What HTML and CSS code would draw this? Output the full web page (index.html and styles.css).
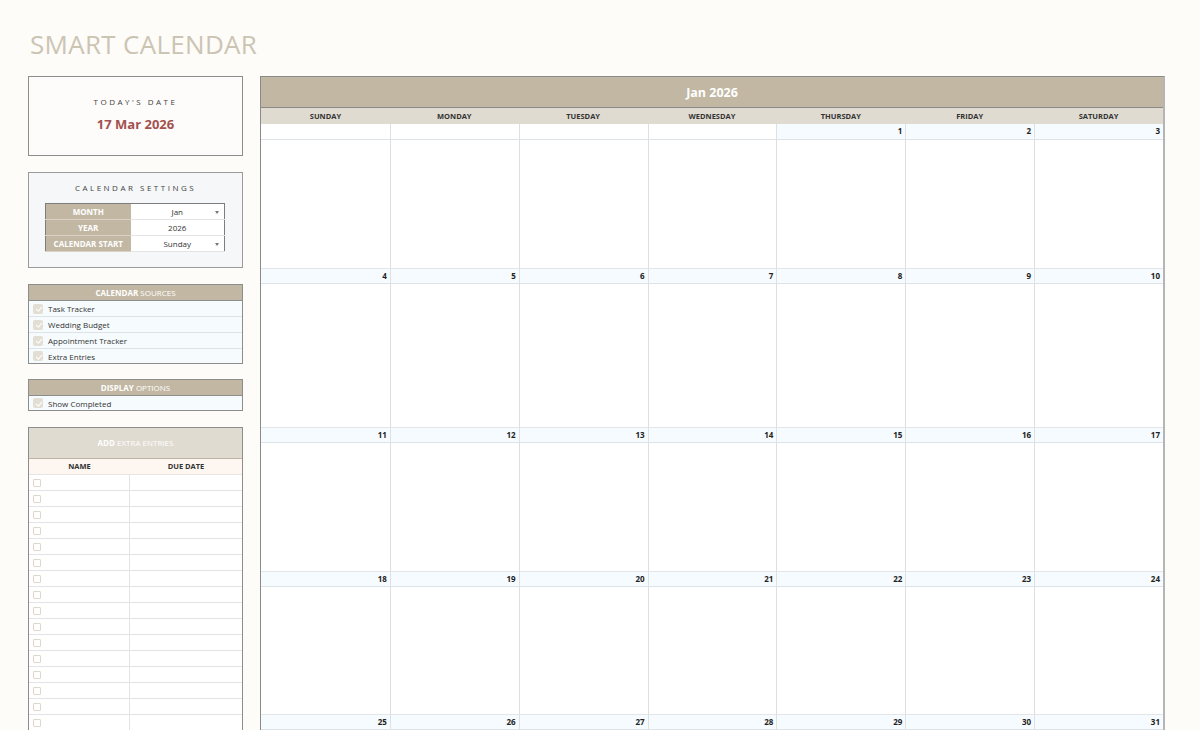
FILE: index.html
```html
<!DOCTYPE html>
<html>
<head>
<meta charset="utf-8">
<link rel="stylesheet" href="styles.css">
</head>
<body>
<div class="page">
  <h1 class="title">SMART CALENDAR</h1>
  <div class="main">
    <aside class="sidebar">
      <section class="today">
        <div class="caption">TODAY'S DATE</div>
        <div class="today-value">17 Mar 2026</div>
      </section>

      <section class="settings">
        <div class="caption">CALENDAR SETTINGS</div>
        <table class="settings-table">
          <tr><th>MONTH</th><td><span>Jan</span><i class="arrow"></i></td></tr>
          <tr><th>YEAR</th><td><span>2026</span></td></tr>
          <tr><th>CALENDAR START</th><td><span>Sunday</span><i class="arrow"></i></td></tr>
        </table>
      </section>

      <section class="list">
        <div class="list-head"><b>CALENDAR</b> SOURCES</div>
        <div class="list-row"><span class="check"></span>Task Tracker</div>
        <div class="list-row"><span class="check"></span>Wedding Budget</div>
        <div class="list-row"><span class="check"></span>Appointment Tracker</div>
        <div class="list-row"><span class="check"></span>Extra Entries</div>
      </section>

      <section class="list display">
        <div class="list-head"><b>DISPLAY</b> OPTIONS</div>
        <div class="list-row"><span class="check"></span>Show Completed</div>
      </section>

      <section class="extra">
        <div class="extra-head"><b>ADD</b> EXTRA ENTRIES</div>
        <div class="extra-cols"><div>NAME</div><div>DUE DATE</div></div>
        <div class="extra-row"><div><span class="box"></span></div><div></div></div>
        <div class="extra-row"><div><span class="box"></span></div><div></div></div>
        <div class="extra-row"><div><span class="box"></span></div><div></div></div>
        <div class="extra-row"><div><span class="box"></span></div><div></div></div>
        <div class="extra-row"><div><span class="box"></span></div><div></div></div>
        <div class="extra-row"><div><span class="box"></span></div><div></div></div>
        <div class="extra-row"><div><span class="box"></span></div><div></div></div>
        <div class="extra-row"><div><span class="box"></span></div><div></div></div>
        <div class="extra-row"><div><span class="box"></span></div><div></div></div>
        <div class="extra-row"><div><span class="box"></span></div><div></div></div>
        <div class="extra-row"><div><span class="box"></span></div><div></div></div>
        <div class="extra-row"><div><span class="box"></span></div><div></div></div>
        <div class="extra-row"><div><span class="box"></span></div><div></div></div>
        <div class="extra-row"><div><span class="box"></span></div><div></div></div>
        <div class="extra-row"><div><span class="box"></span></div><div></div></div>
        <div class="extra-row"><div><span class="box"></span></div><div></div></div>
      </section>
    </aside>

    <section class="calendar">
      <div class="month">Jan 2026</div>
      <div class="days">
        <div>SUNDAY</div><div>MONDAY</div><div>TUESDAY</div><div>WEDNESDAY</div><div>THURSDAY</div><div>FRIDAY</div><div>SATURDAY</div>
      </div>

      <div class="week">
        <div class="date blank"></div><div class="date blank"></div><div class="date blank"></div><div class="date blank"></div><div class="date">1</div><div class="date">2</div><div class="date">3</div>
        <div class="cell"></div><div class="cell"></div><div class="cell"></div><div class="cell"></div><div class="cell"></div><div class="cell"></div><div class="cell"></div>
      </div>
      <div class="week tall">
        <div class="date">4</div><div class="date">5</div><div class="date">6</div><div class="date">7</div><div class="date">8</div><div class="date">9</div><div class="date">10</div>
        <div class="cell"></div><div class="cell"></div><div class="cell"></div><div class="cell"></div><div class="cell"></div><div class="cell"></div><div class="cell"></div>
      </div>
      <div class="week">
        <div class="date">11</div><div class="date">12</div><div class="date">13</div><div class="date">14</div><div class="date">15</div><div class="date">16</div><div class="date">17</div>
        <div class="cell"></div><div class="cell"></div><div class="cell"></div><div class="cell"></div><div class="cell"></div><div class="cell"></div><div class="cell"></div>
      </div>
      <div class="week short">
        <div class="date">18</div><div class="date">19</div><div class="date">20</div><div class="date">21</div><div class="date">22</div><div class="date">23</div><div class="date">24</div>
        <div class="cell"></div><div class="cell"></div><div class="cell"></div><div class="cell"></div><div class="cell"></div><div class="cell"></div><div class="cell"></div>
      </div>
      <div class="week">
        <div class="date">25</div><div class="date">26</div><div class="date">27</div><div class="date">28</div><div class="date">29</div><div class="date">30</div><div class="date">31</div>
        <div class="cell"></div><div class="cell"></div><div class="cell"></div><div class="cell"></div><div class="cell"></div><div class="cell"></div><div class="cell"></div>
      </div>
    </section>
  </div>
</div>
</body>
</html>
```

FILE: styles.css
```css
* { box-sizing: border-box; }
html, body { margin: 0; padding: 0; }
body {
  background: #fdfcf8;
  font-family: "Open Sans", "Liberation Sans", sans-serif;
  color: #333;
  width: 1200px;
  height: 730px;
  overflow: hidden;
}
.page { padding: 28px 0 0 28px; }
.title {
  margin: 0 0 0 2px;
  font-size: 26px;
  line-height: 32px;
  font-weight: 400;
  color: #ccc4b3;
  letter-spacing: 0.3px;
  height: 48px;
}
.main { display: flex; gap: 17px; align-items: flex-start; }

/* sidebar */
.sidebar { width: 215px; display: flex; flex-direction: column; }
.caption {
  font-size: 8px;
  letter-spacing: 2.5px;
  color: #3f3f3f;
  text-align: center;
  line-height: 10px;
}
.today {
  height: 80px;
  border: 1px solid #8d8d8d;
  background: #fdfcfa;
  padding-top: 20px;
}
.today-value {
  margin-top: 9px;
  text-align: center;
  font-weight: 700;
  font-size: 13px;
  line-height: 16px;
  color: #a3504f;
}
.settings {
  margin-top: 16px;
  height: 96px;
  border: 1px solid #9b9b9b;
  background: #f6f7f9;
  padding-top: 10px;
}
.settings-table {
  margin: 10px 0 0 16px;
  width: 180px;
  border-collapse: collapse;
  border: 1px solid #7e7e7e;
}
.settings-table th {
  width: 85px;
  height: 16px;
  padding: 0;
  background: #c2b7a3;
  color: #fff;
  font-size: 8px;
  font-weight: 700;
  text-align: center;
  border-bottom: 1px solid #d8d2c6;
}
.settings-table td {
  height: 16px;
  padding: 0;
  background: #fff;
  font-size: 8px;
  text-align: center;
  position: relative;
  border-bottom: 1px solid #e4e4e4;
}
.arrow {
  position: absolute;
  right: 5px;
  top: 7px;
  width: 0;
  height: 0;
  border-left: 2.5px solid transparent;
  border-right: 2.5px solid transparent;
  border-top: 3px solid #777;
}

.list {
  margin-top: 16px;
  border: 1px solid #8d8d8d;
  background: #f6fbfd;
}
.list.display { margin-top: 15px; }
.list-head {
  height: 16px;
  background: #c2b7a3;
  color: #fff;
  font-size: 8px;
  line-height: 15px;
  text-align: center;
  border-bottom: 1px solid #8d8d8d;
}
.list-head b { font-weight: 700; }
.list-row {
  height: 16px;
  display: flex;
  align-items: center;
  font-size: 8px;
  color: #333;
  border-bottom: 1px solid #dfe3e5;
  padding-left: 4px;
}
.list-row:last-child { border-bottom: none; height: 14px; }
.check {
  width: 10px;
  height: 10px;
  border-radius: 2px;
  background: #e3ded4;
  margin-right: 5px;
  position: relative;
}
.check::after {
  content: "";
  position: absolute;
  left: 3.5px;
  top: 1.5px;
  width: 2.5px;
  height: 5px;
  border-right: 1px solid #fff;
  border-bottom: 1px solid #fff;
  transform: rotate(40deg);
}

.extra {
  margin-top: 16px;
  border: 1px solid #8d8d8d;
  border-bottom: none;
  background: #fff;
}
.extra-head {
  height: 31px;
  background: #e0dbd0;
  color: #fff;
  font-size: 8px;
  line-height: 30px;
  text-align: center;
  border-bottom: 1px solid #bdb4a6;
}
.extra-cols {
  display: grid;
  grid-template-columns: 101px 1fr;
  height: 16px;
  background: #fdf6f1;
  font-size: 7.5px;
  font-weight: 700;
  color: #333;
  text-align: center;
  line-height: 15px;
  border-bottom: 1px solid #e6e6e6;
}
.extra-row {
  display: grid;
  grid-template-columns: 101px 1fr;
  height: 16px;
  border-bottom: 1px solid #e3e3e3;
}
.extra-row > div:first-child {
  border-right: 1px solid #e3e3e3;
  display: flex;
  align-items: center;
  padding-left: 4px;
}
.box {
  width: 8px;
  height: 8px;
  border: 1px solid #dcd6cb;
  border-radius: 1px;
  background: #fff;
}

/* calendar */
.calendar {
  width: 905px;
  border: 1px solid #8a8a8a;
  border-bottom: none;
  border-right-width: 2px;
  border-right-color: #b5b5b5;
  background: #fff;
}
.month {
  height: 31px;
  background: #c2b7a3;
  color: #fff;
  font-weight: 700;
  font-size: 12.5px;
  line-height: 31px;
  text-align: center;
  border-bottom: 1px solid #8a8a8a;
}
.days {
  display: grid;
  grid-template-columns: repeat(7, 1fr);
  height: 16px;
  background: #e0dbd0;
}
.days div {
  font-size: 7.5px;
  font-weight: 700;
  color: #333;
  text-align: center;
  line-height: 16px;
}
.week {
  display: grid;
  grid-template-columns: repeat(7, 1fr);
  grid-template-rows: 16px 128px;
}
.week.tall { grid-template-rows: 16px 143px; }
.week.short { grid-template-rows: 16px 127px; }
.date {
  background: #f5fbfe;
  border-bottom: 1px solid #dde3e6;
  border-left: 1px solid #e0e0e0;
  border-top: 1px solid #e3e6e8;
  font-size: 8px;
  font-weight: 700;
  color: #222;
  text-align: right;
  padding-right: 3px;
  line-height: 14px;
}
.date.blank { background: #fff; }
.days + .week .date { border-top: none; }
.date:first-child, .cell:nth-child(8) { border-left: none; }
.cell {
  border-left: 1px solid #dedede;
}
```
